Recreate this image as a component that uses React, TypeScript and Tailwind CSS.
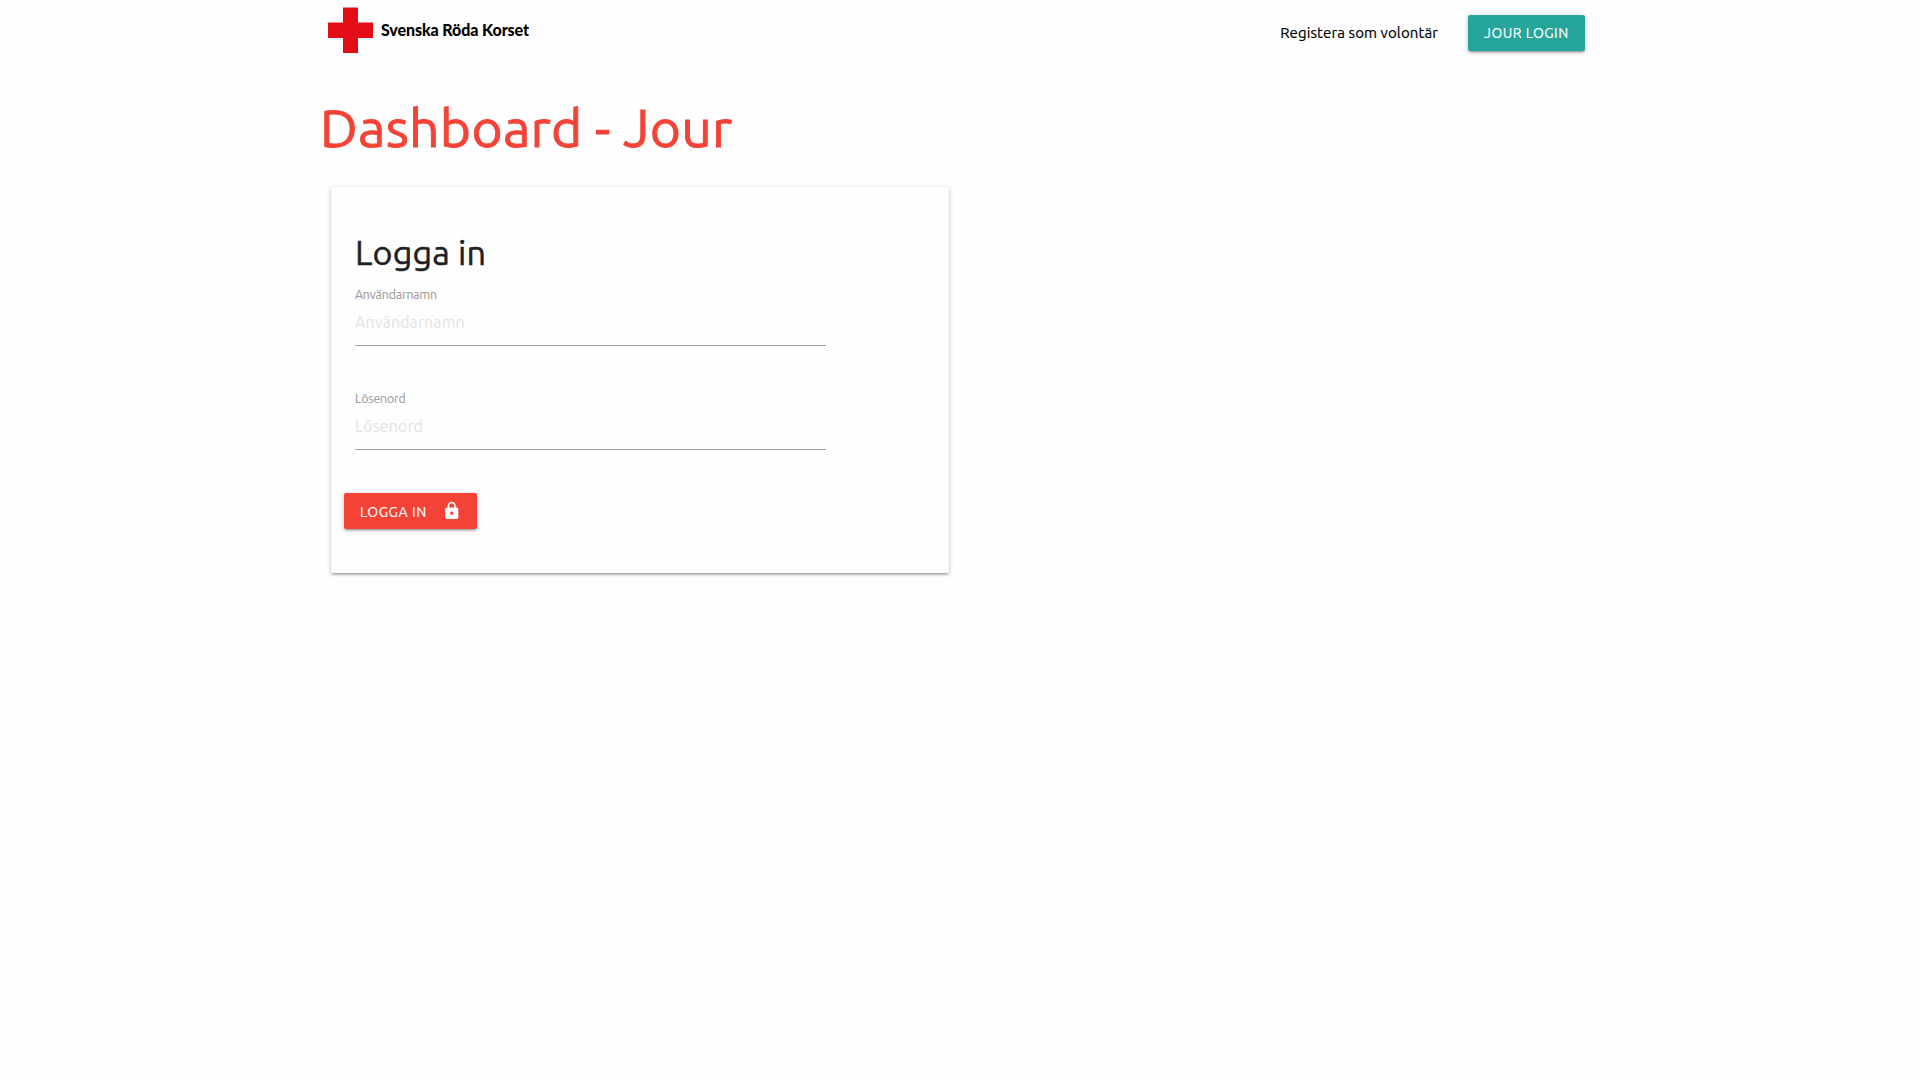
import { MdLock } from "react-icons/md";

const elevation =
  "shadow-[0_2px_2px_0_rgba(0,0,0,0.14),0_3px_1px_-2px_rgba(0,0,0,0.12),0_1px_5px_0_rgba(0,0,0,0.2)]";

function Logo() {
  return (
    <a href="#" className="flex items-start pt-[7px] pl-2">
      <svg width="45" height="46" viewBox="0 0 45 46" fill="#e30d17" aria-hidden="true">
        <path d="M15 .5h15v15h15v15.5H30v15H15V31H0V15.5h15z" />
      </svg>
      <span className="ml-2 mt-[11px] whitespace-nowrap font-['Lato',sans-serif] text-[16px] font-black leading-6 tracking-[-0.1px] text-black">
        Svenska Röda Korset
      </span>
    </a>
  );
}

function Field({ label, type }: { label: string; type: string }) {
  return (
    <label className="block h-[104px]">
      <span className="block h-4 text-[12.3px] leading-[15px] tracking-[-0.13px] text-[#9e9e9e] [-webkit-text-stroke:0.15px]">
        {label}
      </span>
      <input
        type={type}
        placeholder={label}
        className="block h-[43px] w-[471px] border-b border-[#9e9e9e] bg-transparent pb-1 text-[16px] tracking-[0.1px] outline-none placeholder:text-[#e2e2e2]"
      />
    </label>
  );
}

export default function App() {
  return (
    <div className="min-h-screen bg-[#fefefe] font-['Ubuntu','Noto_Sans',sans-serif] text-[#212121]">
      <div className="mx-auto w-[1280px]">
        <header className="flex h-16 items-start justify-between">
          <Logo />
          <nav className="flex items-start pr-[15px] pt-[15px]">
            <a
              href="#"
              className="mr-[30px] whitespace-nowrap text-[15px] leading-9 tracking-[0.1px] text-black [-webkit-text-stroke:0.2px]"
            >
              Registera som volontär
            </a>
            <a
              href="#"
              className={`block h-9 w-[117px] whitespace-nowrap rounded-[2px] bg-[#26a69a] pl-4 text-[14px] leading-9 tracking-[0.5px] text-white [-webkit-text-stroke:0.15px] ${elevation}`}
            >
              JOUR LOGIN
            </a>
          </nav>
        </header>
        <main>
          <h1 className="mt-[31px] h-[64px] whitespace-nowrap text-[53.4px] leading-[64px] tracking-[0.27px] text-[#f44336] [-webkit-text-stroke:0.9px]">
            Dashboard - Jour
          </h1>
          <section className={`ml-[11px] mt-7 h-[386px] w-[618px] rounded-[2px] bg-[#fefefe] pl-6 pt-[45px] ${elevation}`}>
            <h2 className="h-10 whitespace-nowrap text-[34.2px] leading-10 tracking-[0.15px] [-webkit-text-stroke:0.5px]">
              Logga in
            </h2>
            <form className="pt-[15px]">
              <Field label="Användarnamn" type="text" />
              <Field label="Lösenord" type="password" />
              <button
                type="button"
                className={`-ml-[11px] -mt-0.5 flex h-9 w-[133px] items-center justify-between rounded-[2px] bg-[#f44336] px-4 text-[14px] tracking-[0.6px] text-white ${elevation}`}
              >
                <span className="whitespace-nowrap pt-px leading-9 [-webkit-text-stroke:0.15px]">LOGGA IN</span>
                <MdLock size={19.5} />
              </button>
            </form>
          </section>
        </main>
      </div>
    </div>
  );
}
